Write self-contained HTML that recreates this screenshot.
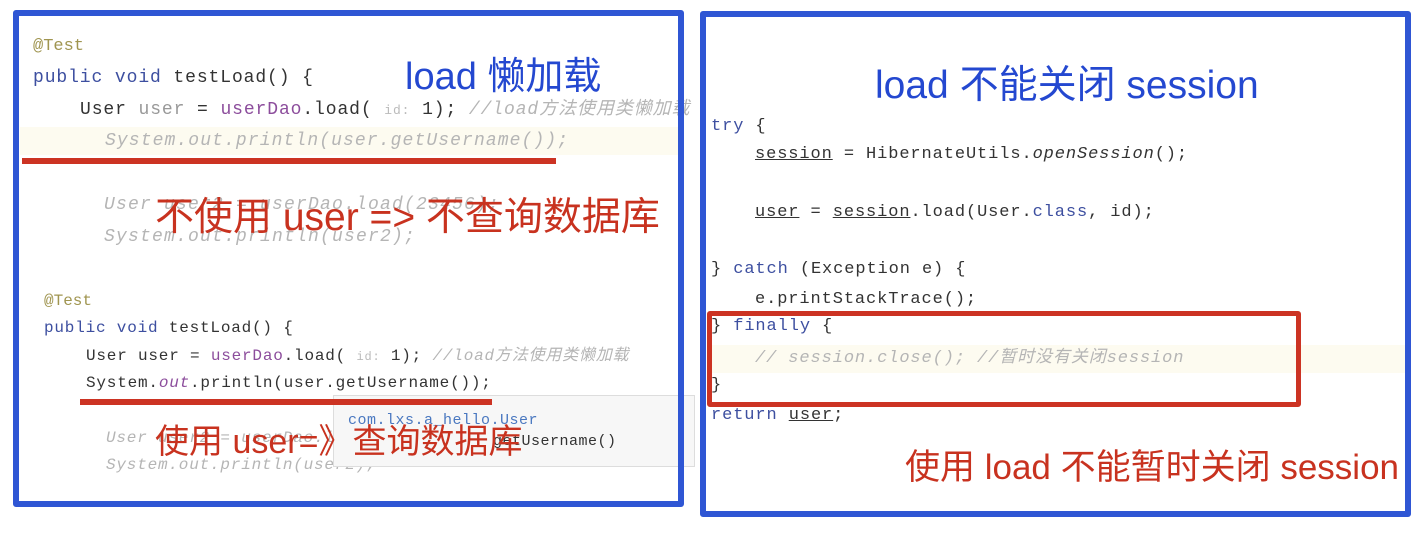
<!DOCTYPE html>
<html><head><meta charset="utf-8"><style>
body{margin:0;width:1428px;height:552px;background:#fff;position:relative;overflow:hidden;font-family:"Liberation Sans","Noto Sans CJK SC",sans-serif}
.a{position:absolute;white-space:pre;line-height:1}
.m{font-family:"Liberation Mono",monospace;color:#333}
.f{color:#b5b5b5;font-style:italic}
.kw{color:#3d4fa0}
.an{color:#a09550}
.pu{color:#8c4d9c}
.box{position:absolute;border:6px solid #2f56d4;box-sizing:border-box;border-radius:3px}
.rl{position:absolute;background:#cc3323}
.red{color:#c8321f}
.blue{color:#2448d0}
</style></head><body>
<!-- left code -->
<div style="position:absolute;left:20px;top:127px;width:660px;height:28px;background:#fdfbf0"></div>
<div class="a m an" style="left:33px;top:38px;font-size:17px">@Test</div>
<div class="a m" style="left:33px;top:69px;font-size:18px;letter-spacing:.9px"><span class="kw">public void</span> testLoad() {</div>
<div class="a m" style="left:80px;top:101px;font-size:18px;letter-spacing:.9px">User <span style="color:#999">user</span> = <span class="pu">userDao</span>.load( <span style="color:#bbb;font-size:13px">id:</span> 1); <span class="f">//load方法使用类懒加载</span></div>
<div class="a m f" style="left:105px;top:132px;font-size:18px;letter-spacing:1.1px">System.out.println(user.getUsername());</div>
<div class="rl" style="left:22px;top:158px;width:534px;height:6px"></div>
<div class="a m f" style="left:104px;top:196px;font-size:18px;letter-spacing:1.2px">User user2 = userDao.load(23456);</div>
<div class="a m f" style="left:104px;top:228px;font-size:18px;letter-spacing:1.2px">System.out.println(user2);</div>
<div class="a blue" style="left:405px;top:58px;font-size:38px">load 懒加载</div>
<div class="a red" style="left:155px;top:198px;font-size:39px">不使用 user =&gt; 不查询数据库</div>

<div class="a m an" style="left:44px;top:293px;font-size:16px">@Test</div>
<div class="a m" style="left:44px;top:320px;font-size:16px;letter-spacing:.8px"><span class="kw">public void</span> testLoad() {</div>
<div class="a m" style="left:86px;top:348px;font-size:16px;letter-spacing:.8px">User user = <span class="pu">userDao</span>.load( <span style="color:#bbb;font-size:12px">id:</span> 1); <span class="f">//load方法使用类懒加载</span></div>
<div class="a m" style="left:86px;top:375px;font-size:16px;letter-spacing:.8px">System.<span class="pu" style="font-style:italic">out</span>.println(user.getUsername());</div>
<div class="a m f" style="left:106px;top:430px;font-size:16px;letter-spacing:.8px">User user2 = userDao.load(</div>
<div class="a m f" style="left:106px;top:457px;font-size:16px;letter-spacing:.8px">System.out.println(user2);</div>
<div style="position:absolute;left:333px;top:395px;width:360px;height:70px;background:#f7f7f7;border:1px solid #ddd"></div>
<div class="rl" style="left:80px;top:399px;width:412px;height:6px"></div>
<div class="a m" style="left:348px;top:413px;font-size:15px;color:#4a78c0;letter-spacing:.5px">com.lxs.a_hello.User</div>
<div class="a m" style="left:493px;top:434px;font-size:15px;letter-spacing:.5px">getUsername()</div>
<div class="a red" style="left:155px;top:425px;font-size:34px">使用 user=》查询数据库</div>
<div class="box" style="left:13px;top:10px;width:671px;height:497px"></div>

<!-- right -->
<div style="position:absolute;left:710px;top:345px;width:700px;height:28px;background:#fdfbf0"></div>
<div class="a blue" style="left:875px;top:66px;font-size:39px">load 不能关闭 session</div>
<div class="a m" style="left:711px;top:118px;font-size:17px;letter-spacing:.9px"><span class="kw">try</span> {</div>
<div class="a m" style="left:755px;top:146px;font-size:17px;letter-spacing:.9px"><u>session</u> = HibernateUtils.<i>openSession</i>();</div>
<div class="a m" style="left:755px;top:204px;font-size:17px;letter-spacing:.9px"><u>user</u> = <u>session</u>.load(User.<span class="kw">class</span>, id);</div>
<div class="a m" style="left:711px;top:261px;font-size:17px;letter-spacing:.9px">} <span class="kw">catch</span> (Exception e) {</div>
<div class="a m" style="left:755px;top:291px;font-size:17px;letter-spacing:.9px">e.printStackTrace();</div>
<div class="a m" style="left:711px;top:318px;font-size:17px;letter-spacing:.9px">} <span class="kw">finally</span> {</div>
<div class="a m f" style="left:755px;top:350px;font-size:17px;letter-spacing:.9px">// session.close(); //暂时没有关闭session</div>
<div class="a m" style="left:711px;top:377px;font-size:17px">}</div>
<div class="a m" style="left:711px;top:407px;font-size:17px;letter-spacing:.9px"><span class="kw">return</span> <u>user</u>;</div>
<div style="position:absolute;left:707px;top:311px;width:594px;height:96px;border:5px solid #cc3323;box-sizing:border-box;border-radius:3px"></div>
<div class="a red" style="left:905px;top:450px;font-size:35px">使用 load 不能暂时关闭 session</div>
<div class="box" style="left:700px;top:11px;width:711px;height:506px"></div>
</body></html>
